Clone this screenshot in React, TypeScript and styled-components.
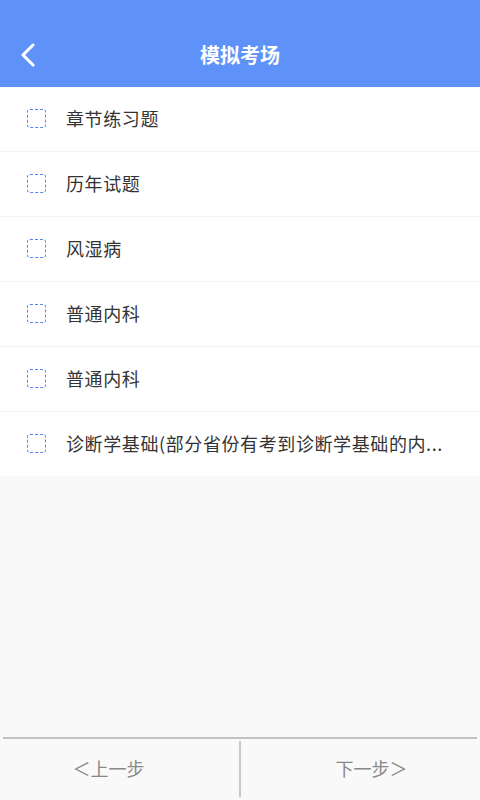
import styled, { createGlobalStyle } from "styled-components";

const GlobalStyle = createGlobalStyle`
  html, body {
    margin: 0;
    padding: 0;
    background: #f9f9f9;
    font-family: "Noto Sans CJK SC", "Noto Sans", sans-serif;
  }
`;

const chapters = ["章节练习题", "历年试题", "风湿病", "普通内科", "普通内科", "诊断学基础(部分省份有考到诊断学基础的内..."];

function App() {
  return (
    <Page>
      <GlobalStyle />
      <Header>
        <BackButton aria-label="返回">
          <svg width="16" height="24" viewBox="0 0 16 24">
            <path d="M13 2 L3 12 L13 22" fill="none" stroke="#fff" strokeWidth="3" strokeLinecap="round" strokeLinejoin="round" />
          </svg>
        </BackButton>
        <Title>模拟考场</Title>
      </Header>
      <List>
        {chapters.map((name, i) => (
          <Row key={i}>
            <Check />
            <Label>{name}</Label>
          </Row>
        ))}
      </List>
      <Spacer />
      <Footer>
        <StepButton side="left">＜上一步</StepButton>
        <StepButton side="right">下一步＞</StepButton>
      </Footer>
    </Page>
  );
}

const Page = styled.div`
  width: 480px;
  height: 800px;
  display: flex;
  flex-direction: column;
  background: #f9f9f9;
`;

const Header = styled.div`
  height: 87px;
  background: #5f92f8;
  display: flex;
  align-items: flex-end;
  justify-content: center;
  position: relative;
  flex-shrink: 0;
`;

const BackButton = styled.div`
  position: absolute;
  left: 20px;
  bottom: 20px;
  display: flex;
`;

const Title = styled.div`
  color: #fff;
  font-size: 20px;
  font-weight: bold;
  line-height: 26px;
  padding-bottom: 19px;
`;

const List = styled.div`
  background: #fff;
  display: flex;
  flex-direction: column;
`;

const Row = styled.div`
  height: 64px;
  border-bottom: 1px solid #f3f3f3;
  display: flex;
  align-items: center;
  padding: 0 30px 0 27px;
  gap: 20px;
  &:last-child {
    border-bottom: none;
  }
`;

const Check = styled.div`
  width: 17px;
  height: 17px;
  border: 1px dashed #4f87f5;
  border-radius: 3px;
  flex-shrink: 0;
  margin-bottom: 2px;
`;

const Label = styled.div`
  flex: 1;
  min-width: 0;
  font-size: 18px;
  letter-spacing: 0.6px;
  line-height: 24px;
  color: #333;
  white-space: nowrap;
  margin-bottom: 2px;
`;

const Spacer = styled.div`
  flex: 1;
`;

const Footer = styled.div`
  height: 61px;
  margin: 0 3px;
  border-top: 2px solid #c3c3c3;
  display: grid;
  grid-template-columns: 1fr 1fr;
  flex-shrink: 0;
`;

const StepButton = styled.div<{ side: "left" | "right" }>`
  display: flex;
  align-items: center;
  justify-content: center;
  font-size: 18px;
  color: #888;
  padding-bottom: 4px;
  position: relative;
  ${(p) => (p.side === "left" ? "padding-right: 26px;" : "padding-left: 26px;")}
  ${(p) =>
    p.side === "right" &&
    `&::before {
      content: "";
      position: absolute;
      left: -1px;
      top: 2px;
      bottom: 3px;
      width: 2px;
      background: #c8c8c8;
    }`}
`;

export default App;
